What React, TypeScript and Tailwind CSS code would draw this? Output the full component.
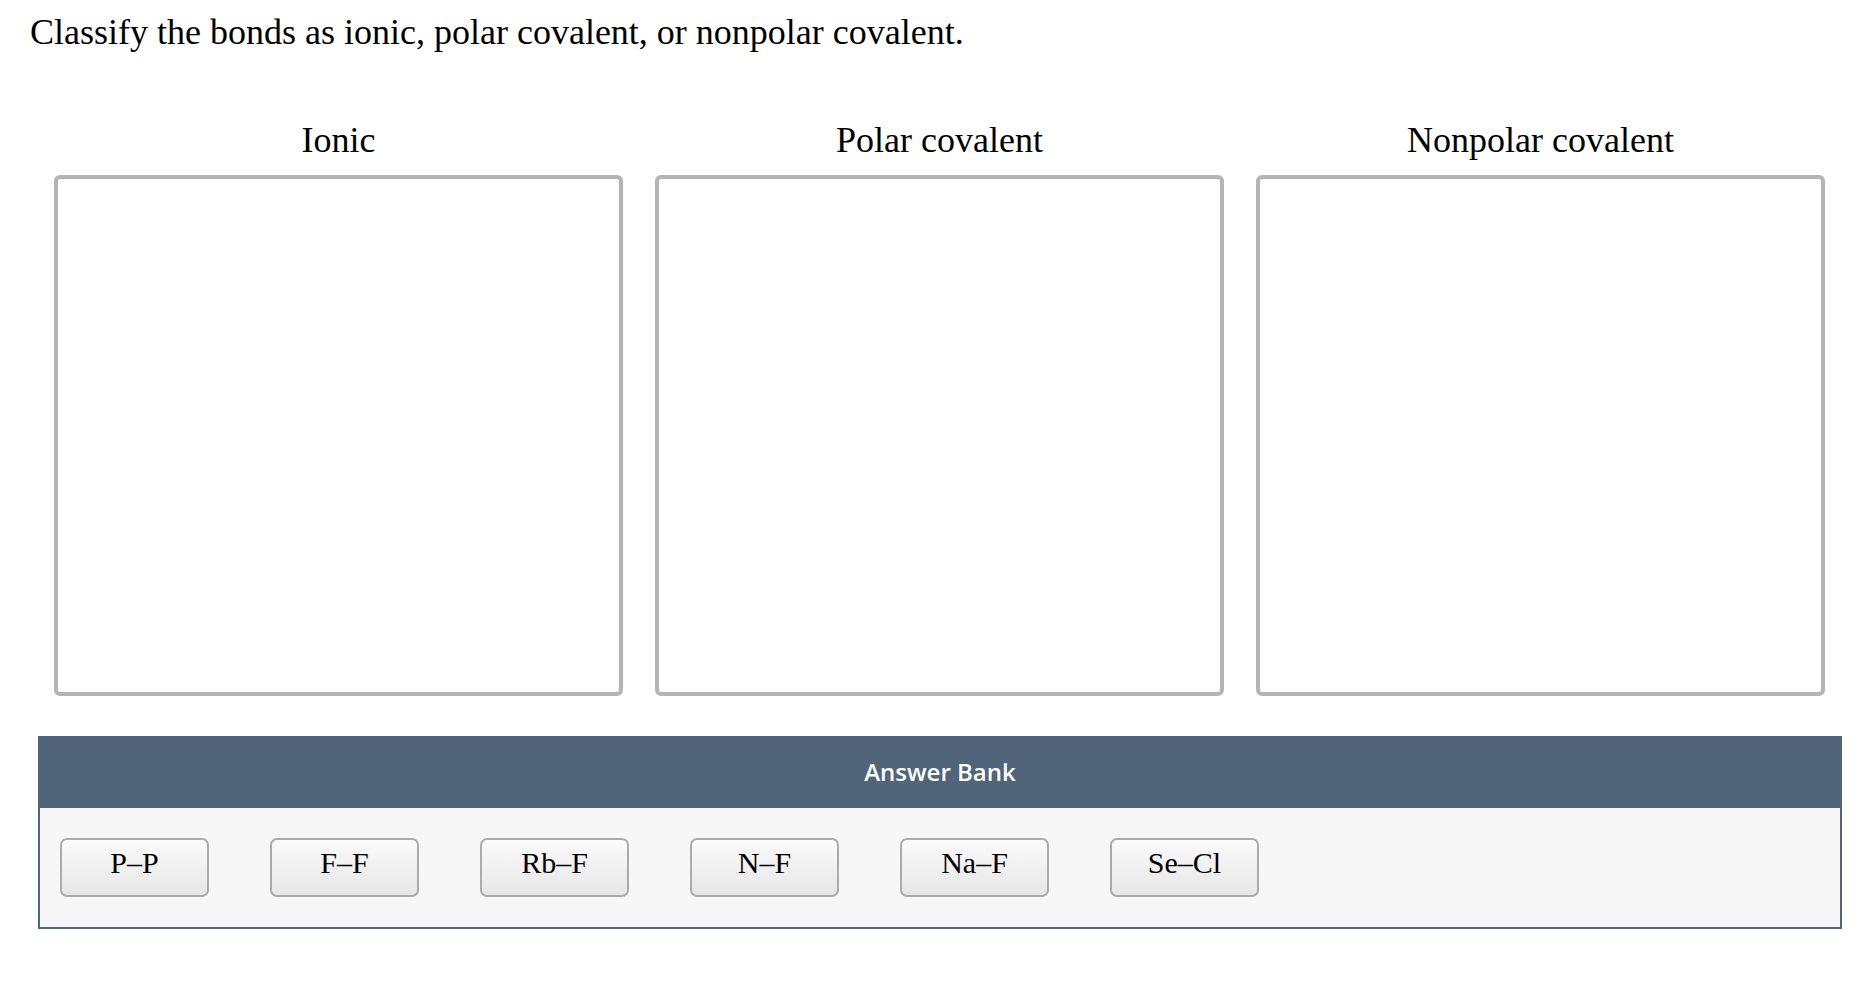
const bins = ["Ionic", "Polar covalent", "Nonpolar covalent"];

const bonds = ["P–P", "F–F", "Rb–F", "N–F", "Na–F", "Se–Cl"];

function DropBin({ label }: { label: string }) {
  return (
    <div className="flex flex-col">
      <p className="text-center text-[36px] leading-[40px] text-black">{label}</p>
      <div className="mt-[15px] h-[521px] rounded-md border-4 border-[#b4b4b4] bg-white" />
    </div>
  );
}

function BondTile({ text }: { text: string }) {
  return (
    <button
      type="button"
      className="flex h-[59px] w-[149px] items-center justify-center rounded-[7px] border-2 border-[#ababab] bg-gradient-to-b from-[#fbfbfb] to-[#e6e6e6] pb-[9px] text-[30px] leading-[34px] text-black"
    >
      {text}
    </button>
  );
}

export default function App() {
  return (
    <div className="min-h-screen bg-white font-['Liberation_Serif','Times_New_Roman',serif]">
      <h1 className="pt-[12px] pl-[30px] text-[36px] font-normal leading-[40px] text-black">
        Classify the bonds as ionic, polar covalent, or nonpolar covalent.
      </h1>

      <div className="mt-[68px] ml-[54px] mr-[51px] grid grid-cols-3 gap-[32px]">
        {bins.map((b) => (
          <DropBin key={b} label={b} />
        ))}
      </div>

      <section className="mt-[40px] ml-[38px] mr-[34px]">
        <div className="flex h-[72px] items-center justify-center bg-[#50657a]">
          <span className="font-['Open_Sans',sans-serif] text-[24px] font-semibold text-white">
            Answer Bank
          </span>
        </div>
        <div className="flex h-[121px] gap-[61px] border-x-2 border-b-2 border-[#50657a] bg-[#f7f7f7] px-[20px] py-[30px]">
          {bonds.map((t) => (
            <BondTile key={t} text={t} />
          ))}
        </div>
      </section>
    </div>
  );
}
